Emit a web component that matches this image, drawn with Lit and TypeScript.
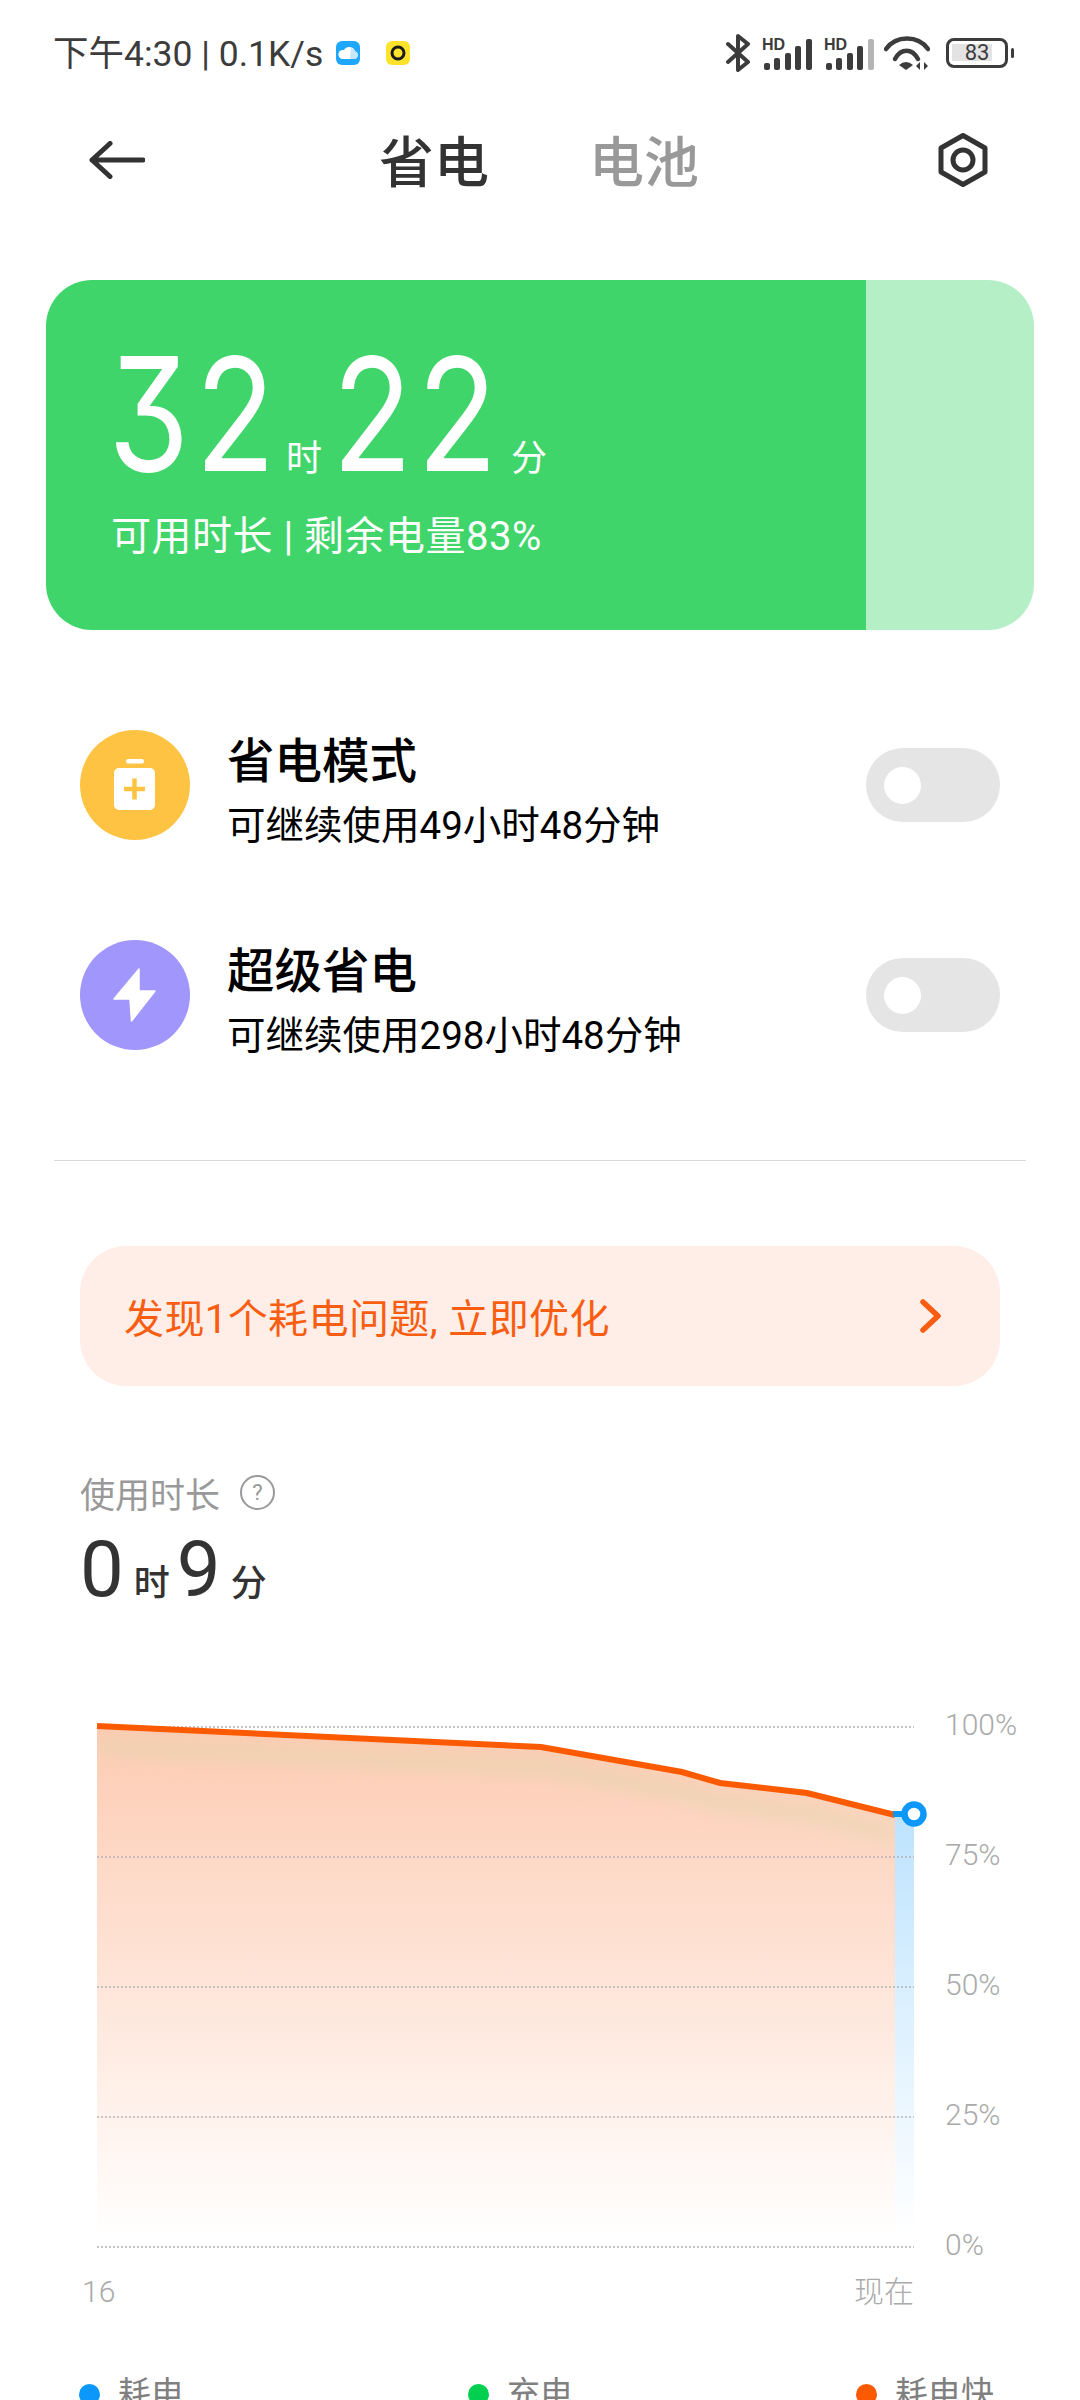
import { LitElement, css, html, svg } from 'lit';
import { customElement } from 'lit/decorators.js';

const LINE = '97,1726 541,1747 682,1772 720,1783 807,1793 895,1815';
const GRID = [
  { y: 1727, label: '100%' },
  { y: 1857, label: '75%' },
  { y: 1987, label: '50%' },
  { y: 2117, label: '25%' },
  { y: 2247, label: '0%' },
];

const signal = (lastFaded: boolean) => html`
  <svg class="signal" width="50" height="36" viewBox="0 -4 50 36">
    <text x="0" y="12" class="hd">HD</text>
    <rect x="2" y="25" width="6" height="7" rx="2" fill="#3c3c3c"></rect>
    <rect x="12" y="20" width="6" height="12" rx="2" fill="#3c3c3c"></rect>
    <rect x="23" y="15" width="6" height="17" rx="2" fill="#3c3c3c"></rect>
    <rect x="33" y="8" width="6" height="24" rx="2" fill="#3c3c3c"></rect>
    <rect x="44" y="1" width="6" height="31" rx="2" fill=${lastFaded ? '#b5b5b5' : '#3c3c3c'}></rect>
  </svg>
`;

@customElement('app-root')
export class AppRoot extends LitElement {
  renderStatus() {
    return html`
      <div class="status">
        <span class="clock">下午4:30 | 0.1K/s</span>
        <svg class="notif" width="24" height="24" viewBox="0 0 24 24">
          <rect width="24" height="24" rx="6" fill="#1ea7fd"></rect>
          <path d="M6 18h12a4 4 0 0 0 1-7.800A6 6 0 0 0 8 9a4.600 4.600 0 0 0-2 9z" fill="#fff"></path>
          <path d="M14 18h4a4 4 0 0 0 1-7.800A6 6 0 0 0 15 7z" fill="#c5e6fd"></path>
        </svg>
        <svg class="notif2" width="24" height="24" viewBox="0 0 24 24">
          <rect width="24" height="24" rx="6" fill="#ffe22b"></rect>
          <circle cx="12" cy="12" r="6" fill="none" stroke="#1a1a1a" stroke-width="3"></circle>
        </svg>
        <div class="status-right">
          <svg width="24" height="38" viewBox="0 0 24 38">
            <path d="M2 10 22 28 12 36V2l10 8L2 28" fill="none" stroke="#3c3c3c" stroke-width="4" stroke-linejoin="round" stroke-linecap="round"></path>
          </svg>
          ${signal(false)} ${signal(true)}
          <svg width="46" height="34" viewBox="0 0 46 34">
            <g fill="none" stroke="#3c3c3c" stroke-width="4.500" stroke-linecap="round">
              <path d="M2 13C12 -1 34 -1 44 13"></path>
              <path d="M11 23C17 12 28 12 34 23"></path>
            </g>
            <path d="M15 29Q22 23 29 29L22 34z" fill="#3c3c3c"></path>
            <path d="M36 26v8l-4-4zM40 34v-8l4 4z" fill="#3c3c3c"></path>
          </svg>
          <div class="battery">
            <div class="battery-body"><span class="battery-fill"></span><span class="battery-num">83</span></div>
            <span class="battery-nub"></span>
          </div>
        </div>
      </div>
    `;
  }

  renderNav() {
    return html`
      <nav class="nav">
        <svg width="56" height="38" viewBox="0 0 56 38">
          <path d="M54 19H3M21 2.500 3 19l18 16.500" fill="none" stroke="#333" stroke-width="5" stroke-linecap="round" stroke-linejoin="round"></path>
        </svg>
        <span class="tab active">省电</span>
        <span class="tab">电池</span>
        <svg class="gear" width="50" height="54" viewBox="0 0 50 54">
          <path d="M25 2.500 47 15v24L25 51.500 3 39V15z" fill="none" stroke="#333" stroke-width="5" stroke-linejoin="round"></path>
          <circle cx="25" cy="27" r="10" fill="none" stroke="#333" stroke-width="5"></circle>
        </svg>
      </nav>
    `;
  }

  renderCard() {
    return html`
      <section class="card">
        <div class="card-main">
          <div class="remain">
            <span class="big">32</span><span class="unit first">时</span>
            <span class="big">22</span><span class="unit">分</span>
          </div>
          <div class="remain-sub">可用时长 | 剩余电量83%</div>
        </div>
        <div class="card-rest"></div>
      </section>
    `;
  }

  renderMode(title: string, sub: string, color: string, icon: unknown) {
    return html`
      <div class="mode">
        <div class="mode-icon" style="background:${color}">${icon}</div>
        <div class="mode-text">
          <div class="mode-title">${title}</div>
          <div class="mode-sub">${sub}</div>
        </div>
        <div class="switch"><span class="knob"></span></div>
      </div>
    `;
  }

  renderChart() {
    return html`
      <svg class="chart" width="1080" height="660" viewBox="0 1680 1080 660">
        <defs>
          <linearGradient id="orange" x1="0" y1="1726" x2="0" y2="2240" gradientUnits="userSpaceOnUse">
            <stop offset="0" stop-color="#fdcbb2"></stop>
            <stop offset="1" stop-color="#fdcbb2" stop-opacity="0"></stop>
          </linearGradient>
          <linearGradient id="blue" x1="0" y1="1815" x2="0" y2="2235" gradientUnits="userSpaceOnUse">
            <stop offset="0" stop-color="#0c98fb" stop-opacity="0.27"></stop>
            <stop offset="1" stop-color="#0c98fb" stop-opacity="0"></stop>
          </linearGradient>
          <filter id="soft" x="-5%" y="-50%" width="110%" height="200%"><feGaussianBlur stdDeviation="8"></feGaussianBlur></filter>
          <clipPath id="under"><polygon points="${LINE} 914,1815 914,2240 97,2240"></polygon></clipPath>
        </defs>
        <polygon points="${LINE} 895,2240 97,2240" fill="url(#orange)"></polygon>
        <g clip-path="url(#under)">
          ${svg`<polyline points="97,1746 541,1767 682,1792 720,1803 807,1813 895,1835" fill="none" stroke="#d9d8a8" stroke-opacity="0.4" stroke-width="18" filter="url(#soft)"></polyline>`}
        </g>
        <rect x="895" y="1815" width="19" height="425" fill="#fff"></rect>
        <rect x="895" y="1815" width="19" height="425" fill="url(#blue)"></rect>
        ${GRID.map(
          (g) => svg`
            <line x1="97" x2="914" y1=${g.y} y2=${g.y} stroke="#b5b5b5" stroke-width="1.300" stroke-dasharray="2 2"></line>
            <text x="945" y=${g.y + 8} class="axis">${g.label}</text>
          `,
        )}
        <polyline points=${LINE} fill="none" stroke="#fc5a01" stroke-width="6"></polyline>
        <line x1="893" y1="1814" x2="905" y2="1814" stroke="#0c98fb" stroke-width="6"></line>
        <circle cx="914" cy="1814" r="9.500" fill="#fff" stroke="#0c98fb" stroke-width="6.500"></circle>
        <text x="82" y="2302" class="axis">16</text>
        <text x="854" y="2302" class="axis">现在</text>
      </svg>
    `;
  }

  render() {
    const batteryIcon = html`<svg width="110" height="110" viewBox="0 0 110 110">
      <rect x="46" y="29" width="18" height="4.500" rx="2.200" fill="#fff"></rect>
      <rect x="34" y="38" width="41" height="42" rx="5" fill="#fff"></rect>
      <path d="M44 59h21M54.500 48.500v21" stroke="#ffc343" stroke-width="4.500"></path>
    </svg>`;
    const boltIcon = html`<svg width="110" height="110" viewBox="0 0 110 110">
      <path d="M59 29 34 59h16l1.500 22L75 51H59z" fill="#fff" stroke="#fff" stroke-width="1.500" stroke-linejoin="round"></path>
    </svg>`;

    return html`
      ${this.renderStatus()} ${this.renderNav()} ${this.renderCard()}
      <div class="modes">
        ${this.renderMode('省电模式', '可继续使用49小时48分钟', '#ffc343', batteryIcon)}
        ${this.renderMode('超级省电', '可继续使用298小时48分钟', '#a096fb', boltIcon)}
      </div>
      <div class="divider"></div>
      <div class="banner">
        <span>发现1个耗电问题, 立即优化</span>
        <svg width="24" height="34" viewBox="0 0 24 34">
          <path d="M4 3 19 17 4 31" fill="none" stroke="#f95d12" stroke-width="5.500" stroke-linecap="round" stroke-linejoin="round"></path>
        </svg>
      </div>
      <div class="usage">
        <div class="usage-label">使用时长<span class="help">?</span></div>
        <div class="usage-value">
          <span class="num">0</span><span class="small">时</span><span class="num second">9</span><span class="small">分</span>
        </div>
      </div>
      ${this.renderChart()}
      <div class="legend">
        <span class="item one"><i style="background:#0c98fb"></i>耗电</span>
        <span class="item two"><i style="background:#00cf4f"></i>充电</span>
        <span class="item"><i style="background:#fc5a01"></i>耗电快</span>
      </div>
    `;
  }

  static styles = css`
    :host {
      display: block;
      width: 1080px;
      height: 2400px;
      overflow: hidden;
      background: #fff;
      font-family: Roboto, 'Noto Sans CJK SC', sans-serif;
    }

    .status {
      display: flex;
      align-items: center;
      height: 106px;
      padding-left: 53px;
      color: #3c3c3c;
    }

    .clock {
      padding-bottom: 5px;
      font-size: 35.500px;
      white-space: nowrap;
    }

    .notif {
      margin-left: 13px;
    }

    .notif2 {
      margin-left: 26px;
    }

    .status-right {
      position: relative;
      display: flex;
      align-items: center;
      margin-left: auto;
      margin-right: 66px;
      gap: 10px;
    }

    .signal {
      margin: -2px 0 0 2px;
    }

    .hd {
      font-family: 'Liberation Sans', sans-serif;
      font-size: 16px;
      font-weight: 700;
      fill: #3c3c3c;
    }

    .battery {
      display: flex;
      align-items: center;
      gap: 3px;
      margin-left: 6px;
    }

    .battery-body {
      position: relative;
      box-sizing: border-box;
      width: 62px;
      height: 30px;
      border: 3.5px solid #3c3c3c;
      border-radius: 8px;
    }

    .battery-fill {
      position: absolute;
      left: 3px;
      top: 3px;
      width: 40px;
      height: 17px;
      background: #e3e3e3;
    }

    .battery-num {
      position: absolute;
      inset: 0;
      text-align: center;
      font-size: 22px;
      line-height: 23px;
      color: #3c3c3c;
    }

    .battery-nub {
      width: 3px;
      height: 10px;
      border-radius: 2px;
      background: #3c3c3c;
    }

    .nav {
      display: flex;
      align-items: center;
      height: 108px;
      padding-left: 89px;
    }

    .tab {
      width: 110px;
      padding-top: 5px;
      font-size: 55px;
      font-weight: 500;
      line-height: 62px;
      color: #999;
      margin-left: 100px;
    }

    .tab.active {
      color: #333;
      margin-left: 234px;
    }

    .gear {
      margin-left: 239px;
    }

    .card {
      display: flex;
      height: 350px;
      margin: 66px 46px 0;
      border-radius: 46px;
      overflow: hidden;
    }

    .card-main {
      box-sizing: border-box;
      width: 820px;
      padding: 46px 0 0 62px;
      background: #40d56a;
      color: #fff;
    }

    .card-rest {
      flex: 1;
      background: #b4efc6;
    }

    .remain {
      display: flex;
      align-items: baseline;
      height: 176px;
    }

    /* no installed face is this narrow, so Inter's flat-top 3 is squeezed */
    .big {
      width: 176px;
      font-family: Inter, Roboto, sans-serif;
      font-feature-settings: 'cv09', 'tnum';
      font-size: 158px;
      font-weight: 400;
      line-height: 176px;
      transform: scaleX(0.83);
      transform-origin: left center;
      white-space: nowrap;
    }

    .unit {
      font-size: 36px;
      margin: 0 0 0 5px;
    }

    .unit.first {
      margin: 0 8px 0 2px;
    }

    .remain-sub {
      margin: 11px 0 0 3px;
      font-size: 40px;
      letter-spacing: 0.5px;
      line-height: 48px;
      white-space: nowrap;
    }

    .modes {
      display: flex;
      flex-direction: column;
      gap: 100px;
      margin-top: 100px;
      padding: 0 80px;
    }

    .mode {
      display: flex;
      align-items: center;
      height: 110px;
    }

    .mode-icon {
      flex: none;
      width: 110px;
      height: 110px;
      border-radius: 50%;
    }

    .mode-icon svg {
      display: block;
    }

    .mode-text {
      margin-left: 37px;
      padding-top: 10px;
    }

    .mode-title {
      font-size: 47.500px;
      font-weight: 500;
      line-height: 60px;
      color: #000;
    }

    .mode-sub {
      margin-top: 11px;
      font-size: 38.500px;
      line-height: 46px;
      color: #000;
      white-space: nowrap;
    }

    .switch {
      display: flex;
      align-items: center;
      width: 134px;
      height: 74px;
      margin-left: auto;
      border-radius: 37px;
      background: #e5e5e5;
    }

    .knob {
      width: 37px;
      height: 37px;
      margin-left: 18px;
      border-radius: 50%;
      background: #fff;
    }

    .divider {
      height: 1px;
      margin: 110px 54px 0;
      background: #d9d9d9;
    }

    .banner {
      display: flex;
      align-items: center;
      justify-content: space-between;
      box-sizing: border-box;
      height: 140px;
      margin: 85px 80px 0;
      padding: 0 57px 0 44px;
      border-radius: 46px;
      background: #feeee7;
      color: #f95d12;
      font-size: 40px;
      letter-spacing: 0.4px;
    }

    .usage {
      padding: 0 80px;
      margin-top: 84px;
    }

    .usage-label {
      display: flex;
      align-items: center;
      height: 44px;
      font-size: 35px;
      color: #999;
    }

    .help {
      display: flex;
      align-items: center;
      justify-content: center;
      box-sizing: border-box;
      width: 35px;
      height: 35px;
      margin-left: 20px;
      border: 2.5px solid #999;
      border-radius: 50%;
      font-size: 22px;
    }

    .usage-value {
      display: flex;
      align-items: baseline;
      margin-top: 10px;
      height: 92px;
      color: #333;
    }

    .num {
      font-size: 78px;
      font-weight: 400;
      line-height: 92px;
    }

    .num.second {
      margin-left: 7px;
    }

    .small {
      margin-left: 10px;
      font-size: 36px;
      font-weight: 500;
    }

    .chart {
      display: block;
      margin-top: 64px;
    }

    .axis {
      font-size: 30px;
      font-weight: 300;
      fill: #aaa;
    }

    .legend {
      display: flex;
      padding-left: 79px;
      margin-top: 32px;
      font-size: 33px;
      line-height: 44px;
      color: #808080;
    }

    .item {
      display: flex;
      align-items: center;
      flex: none;
    }

    .item.one {
      width: 389px;
    }

    .item.two {
      width: 388px;
    }

    .item i {
      width: 21px;
      height: 21px;
      margin-right: 18px;
      border-radius: 50%;
    }
  `;
}

declare global {
  interface HTMLElementTagNameMap {
    'app-root': AppRoot;
  }
}
